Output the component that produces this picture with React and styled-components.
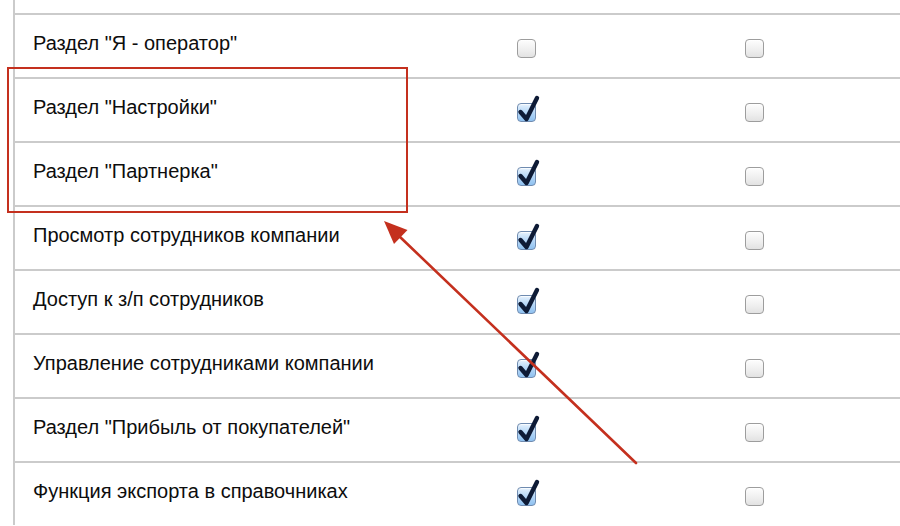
import React from "react";
import styled, { createGlobalStyle } from "styled-components";

const GlobalStyle = createGlobalStyle`
  html, body {
    margin: 0;
    padding: 0;
    background: #ffffff;
  }
  body {
    font-family: "Liberation Sans", Arial, sans-serif;
    width: 900px;
    height: 526px;
    overflow: hidden;
  }
`;

const rows = [
  { label: 'Раздел "Я - оператор"', first: false, second: false },
  { label: 'Раздел "Настройки"', first: true, second: false },
  { label: 'Раздел "Партнерка"', first: true, second: false },
  { label: "Просмотр сотрудников компании", first: true, second: false },
  { label: "Доступ к з/п сотрудников", first: true, second: false },
  { label: "Управление сотрудниками компании", first: true, second: false },
  { label: 'Раздел "Прибыль от покупателей"', first: true, second: false },
  { label: "Функция экспорта в справочниках", first: true, second: false },
];

function Checkbox({ checked }) {
  return (
    <Box checked={checked}>
      {checked && (
        <Tick viewBox="0 0 24 30" width="24" height="30">
          <path
            d="M4.5 17 L10.5 24 L21 3"
            fill="none"
            stroke="#0e1b36"
            strokeWidth="4.4"
            strokeLinecap="round"
            strokeLinejoin="round"
          />
        </Tick>
      )}
    </Box>
  );
}

export default function App() {
  return (
    <Page>
      <GlobalStyle />
      <Table>
        <TopStub />
        {rows.map((row) => (
          <Row key={row.label}>
            <Label>{row.label}</Label>
            <Cell>
              <Checkbox checked={row.first} />
            </Cell>
            <Cell>
              <Checkbox checked={row.second} />
            </Cell>
            <div />
          </Row>
        ))}
      </Table>
      <Highlight />
      <Arrow width="900" height="526" viewBox="0 0 900 526">
        <line
          x1="636"
          y1="463"
          x2="399"
          y2="236"
          stroke="#c4301e"
          strokeWidth="2.6"
          strokeLinecap="round"
        />
        <polygon points="384,221 407.5,230 394,244" fill="#c4301e" />
      </Arrow>
    </Page>
  );
}

const Page = styled.div`
  position: relative;
  width: 900px;
  height: 526px;
  overflow: hidden;
  background: #ffffff;
`;

const Table = styled.div`
  margin-left: 13px;
  border-left: 2px solid #cbcbcb;
  display: flex;
  flex-direction: column;
`;

const TopStub = styled.div`
  height: 13px;
`;

const Row = styled.div`
  display: grid;
  grid-template-columns: 400px 222px 234px 1fr;
  align-items: center;
  height: 62px;
  border-top: 2px solid #cbcbcb;
`;

const Label = styled.div`
  padding-left: 18px;
  padding-bottom: 6px;
  font-size: 20px;
  color: #0d0d0d;
  white-space: nowrap;
`;

const Cell = styled.div`
  display: flex;
  justify-content: center;
  padding-top: 4px;
`;

const Box = styled.div`
  position: relative;
  width: 17px;
  height: 17px;
  border-radius: 4px;
  border: 1.5px solid ${({ checked }) => (checked ? "#6f8bb0" : "#9d9d9d")};
  background: ${({ checked }) =>
    checked
      ? "linear-gradient(#e6f2fd 0%, #b4d6f7 50%, #8fc1f0 100%)"
      : "linear-gradient(#fdfdfd 0%, #eeeeee 60%, #e2e2e2 100%)"};
  box-shadow: inset 0 1px 1px rgba(255, 255, 255, 0.8);
`;

const Tick = styled.svg`
  position: absolute;
  left: -2px;
  top: -9px;
`;

const Highlight = styled.div`
  position: absolute;
  left: 7px;
  top: 67px;
  width: 397px;
  height: 142px;
  border: 2.5px solid #c4301e;
`;

const Arrow = styled.svg`
  position: absolute;
  left: 0;
  top: 0;
  pointer-events: none;
`;
